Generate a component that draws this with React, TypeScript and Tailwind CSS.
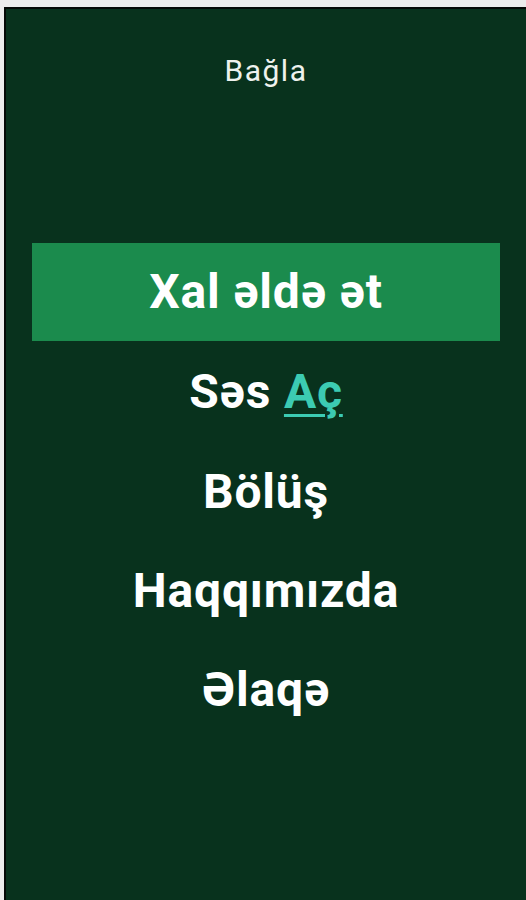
import React from 'react';

const items = ['Bölüş', 'Haqqımızda', 'Əlaqə'];

export default function App() {
  return (
    <div className="w-[526px] h-[900px] bg-[#ececec] pt-[7px] pl-[4px] overflow-hidden font-['Roboto',sans-serif]">
      <div className="w-full h-full bg-[#08321d] border-t-2 border-l-2 border-[#050a07] flex flex-col">
        {/* header */}
        <div className="h-[123px] flex items-center justify-center">
          <span className="text-[30px] tracking-[1.5px] text-[#eef2ee]">Bağla</span>
        </div>

        <div className="mt-[111px] px-[26px] flex flex-col">
          <div className="h-[98px] bg-[#1b8b4d] flex items-center justify-center">
            <span className="text-[48px] tracking-[0.8px] font-bold text-white">Xal əldə ət</span>
          </div>
          <div className="h-[101px] flex items-center justify-center">
            <span className="text-[48px] tracking-[0.8px] font-bold text-white">
              Səs <span className="text-[#3ccbb2] underline decoration-[3px] underline-offset-[6px]">Aç</span>
            </span>
          </div>
          {items.map((t) => (
            <div key={t} className="h-[99px] flex items-center justify-center">
              <span className="text-[48px] tracking-[0.8px] font-bold text-white">{t}</span>
            </div>
          ))}
        </div>
      </div>
    </div>
  );
}
